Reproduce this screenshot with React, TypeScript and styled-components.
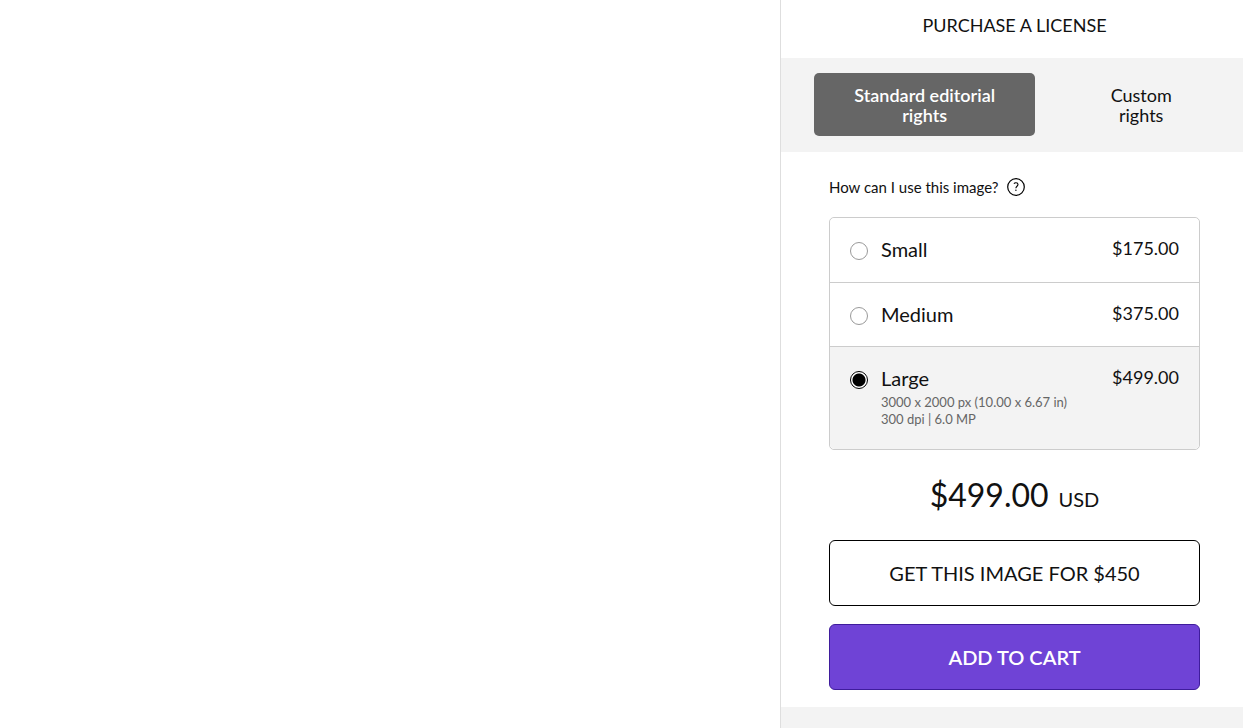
import React, { useState } from "react";
import styled, { createGlobalStyle, css } from "styled-components";

const GlobalStyle = createGlobalStyle`
  *, *::before, *::after { box-sizing: border-box; }
  body { margin: 0; background: #fff; color: #111; font-family: Lato, "Open Sans", sans-serif; font-size: 16px; font-weight: 400; }
  button { font-family: inherit; cursor: pointer; }
`;

const Page = styled.div`
  display: flex;
  min-height: 100vh;
`;

const Preview = styled.main`
  flex: 1;
`;

const Panel = styled.aside`
  display: flex;
  flex-direction: column;
  width: 463px;
  max-width: 100%;
  border-left: 1px solid #dedede;
`;

const Title = styled.h1`
  margin: 0;
  padding: 13px 43px 21px 48px;
  font-size: 18px;
  font-weight: 400;
  line-height: 24px;
  text-align: center;
`;

const RightsTabs = styled.div`
  display: grid;
  grid-template-columns: 3fr 2fr;
  gap: 32px;
  padding: 15px 28px 16px 33px;
  background: #f3f3f3;
`;

const RightsTab = styled.button<{ $selected: boolean }>`
  padding: 12px 32px 11px;
  border: 0;
  border-radius: 5px;
  background: transparent;
  color: #111;
  font-size: 18px;
  font-weight: 400;
  line-height: 20px;
  ${(p) =>
    p.$selected &&
    css`
      background: #666;
      color: #fff;
      font-weight: 600;
    `}
`;

const Body = styled.div`
  display: flex;
  flex-direction: column;
  padding: 23px 43px 17px 48px;
`;

const Help = styled.a`
  display: flex;
  align-items: center;
  align-self: flex-start;
  gap: 9px;
  margin-bottom: 18px;
  color: #111;
  font-size: 15px;
  line-height: 24px;
  text-decoration: none;
`;

const Sizes = styled.fieldset`
  margin: 0;
  padding: 0;
  border: 1px solid #ccc;
  border-radius: 5px;
  overflow: hidden;
`;

const SizeRow = styled.label<{ $selected: boolean }>`
  display: flex;
  align-items: flex-start;
  min-height: 64px;
  padding: 19px 20px 20px;
  background: ${(p) => (p.$selected ? "#f3f3f3" : "#fff")};
  cursor: pointer;
  & + & { border-top: 1px solid #ccc; }
`;

const Radio = styled.input`
  appearance: none;
  flex: none;
  width: 18px;
  height: 18px;
  margin: 5px 13px 0 0;
  border: 1px solid #999;
  border-radius: 50%;
  background: #fff;
  &:checked {
    border-color: #000;
    background: radial-gradient(circle, #000 6px, #fff 7px);
  }
`;

const SizeInfo = styled.span`
  display: flex;
  flex: 1;
  flex-direction: column;
`;

const SizeName = styled.span`
  font-size: 20px;
  line-height: 24px;
`;

const SizeDetails = styled.span`
  display: flex;
  flex-direction: column;
  padding: 4px 0 1px;
  color: #666;
  font-size: 13px;
  line-height: 17px;
`;

const Price = styled.span`
  font-size: 18px;
  line-height: 22px;
`;

const Total = styled.p`
  display: flex;
  align-items: baseline;
  justify-content: center;
  gap: 10px;
  margin: 20px 0;
  font-size: 32px;
  line-height: 50px;
`;

const Currency = styled.span`
  font-size: 20px;
  line-height: 24px;
`;

const Action = styled.button<{ $primary?: boolean }>`
  width: 100%;
  height: 66px;
  padding: 0 16px 1px;
  border: 1px solid ${(p) => (p.$primary ? "#3f1c9c" : "#000")};
  border-radius: 6px;
  background: ${(p) => (p.$primary ? "#6f43d6" : "#fff")};
  color: ${(p) => (p.$primary ? "#fff" : "#111")};
  font-size: 20px;
  font-weight: ${(p) => (p.$primary ? 600 : 400)};
  & + & { margin-top: 18px; }
`;

const PanelFooter = styled.div`
  flex: 1;
  background: #f3f3f3;
`;

const HelpIcon = () => (
  <svg width="18" height="18" viewBox="0 0 18 18" fill="none" stroke="#000" aria-hidden="true">
    <circle cx="9" cy="9" r="8.3" strokeWidth="1.2" />
    <path d="M6.9 5.6C7.4 5 8.1 4.7 8.9 4.7c1.3 0 2.1.7 2.1 1.8 0 1.7-2.1 1.8-2.1 3.7" strokeWidth="1.1" />
    <circle cx="8.9" cy="12.3" r=".7" fill="#000" stroke="none" />
  </svg>
);

const sizes = [
  { name: "Small", price: "$175.00", details: ["1000 x 667 px (13.89 x 9.26 in)", "72 dpi | 0.7 MP"] },
  { name: "Medium", price: "$375.00", details: ["2000 x 1333 px (6.67 x 4.44 in)", "300 dpi | 2.7 MP"] },
  { name: "Large", price: "$499.00", details: ["3000 x 2000 px (10.00 x 6.67 in)", "300 dpi | 6.0 MP"] },
];

const rights = ["Standard editorial rights", "Custom rights"];

export default function App() {
  const [size, setSize] = useState("Large");
  const [right, setRight] = useState(rights[0]);
  const current = sizes.find((s) => s.name === size)!;

  return (
    <Page>
      <GlobalStyle />
      <Preview />
      <Panel>
        <Title>PURCHASE A LICENSE</Title>
        <RightsTabs>
          {rights.map((r) => (
            <RightsTab key={r} type="button" $selected={r === right} aria-pressed={r === right} onClick={() => setRight(r)}>
              {r}
            </RightsTab>
          ))}
        </RightsTabs>
        <Body>
          <Help href="#usage">
            How can I use this image?
            <HelpIcon />
          </Help>
          <Sizes aria-label="Image size">
            {sizes.map((s) => (
              <SizeRow key={s.name} $selected={s.name === size}>
                <Radio type="radio" name="size" checked={s.name === size} onChange={() => setSize(s.name)} />
                <SizeInfo>
                  <SizeName>{s.name}</SizeName>
                  {s.name === size && (
                    <SizeDetails>
                      {s.details.map((d) => (
                        <span key={d}>{d}</span>
                      ))}
                    </SizeDetails>
                  )}
                </SizeInfo>
                <Price>{s.price}</Price>
              </SizeRow>
            ))}
          </Sizes>
          <Total>
            {current.price}
            <Currency>USD</Currency>
          </Total>
          <Action type="button">GET THIS IMAGE FOR $450</Action>
          <Action type="button" $primary>ADD TO CART</Action>
        </Body>
        <PanelFooter />
      </Panel>
    </Page>
  );
}
